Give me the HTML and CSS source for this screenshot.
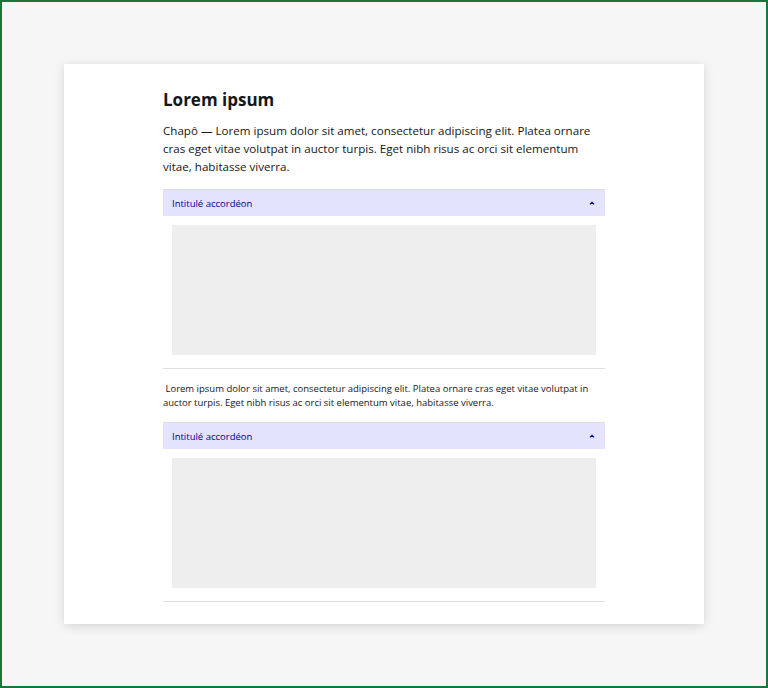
FILE: index.html
```html
<!DOCTYPE html>
<html lang="fr">
<head>
<meta charset="utf-8">
<link rel="stylesheet" href="styles.css">
</head>
<body>
<div class="frame">
  <main class="card">
    <div class="content">
      <h1 class="title">Lorem ipsum</h1>
      <p class="lead">Chapô — Lorem ipsum dolor sit amet, consectetur adipiscing elit. Platea ornare cras eget vitae volutpat in auctor turpis. Eget nibh risus ac orci sit elementum vitae, habitasse viverra.</p>
      <section class="accordion">
        <button class="acc-head"><span>Intitulé accordéon</span>
          <svg class="chev" width="6" height="4" viewBox="0 0 6 4"><path d="M1 3.3 L3 1.3 L5 3.3" fill="none" stroke="#000091" stroke-width="1.2"/></svg>
        </button>
        <div class="acc-body"><div class="placeholder"></div></div>
      </section>
      <p class="text">&nbsp;Lorem ipsum dolor sit amet, consectetur adipiscing elit. Platea ornare cras eget vitae volutpat in auctor turpis. Eget nibh risus ac orci sit elementum vitae, habitasse viverra.</p>
      <section class="accordion">
        <button class="acc-head"><span>Intitulé accordéon</span>
          <svg class="chev" width="6" height="4" viewBox="0 0 6 4"><path d="M1 3.3 L3 1.3 L5 3.3" fill="none" stroke="#000091" stroke-width="1.2"/></svg>
        </button>
        <div class="acc-body"><div class="placeholder"></div></div>
      </section>
    </div>
  </main>
</div>
</body>
</html>
```
FILE: styles.css
```css
html, body {
  margin: 0;
  padding: 0;
}
body {
  font-family: "Open Sans", "Liberation Sans", sans-serif;
  color: #161616;
}
.frame {
  box-sizing: border-box;
  width: 768px;
  height: 688px;
  border: 2px solid #18753c;
  background: #f6f6f6;
  padding: 62px 0 0 62px;
}
.card {
  width: 640px;
  height: 560px;
  background: #fff;
  box-shadow: 0 2px 10px rgba(0, 0, 0, 0.14);
}
.content {
  width: 442px;
  margin: 0 auto;
  padding-top: 24px;
}
.title {
  margin: 0;
  font-size: 17px;
  line-height: 24px;
  font-weight: 700;
  color: #161616;
}
.lead {
  margin: 10px 0 13px;
  font-size: 11.6px;
  line-height: 18px;
}
.accordion {
  border-top: 1px solid #dddddd;
  border-bottom: 1px solid #dddddd;
}
.acc-head {
  display: flex;
  align-items: center;
  justify-content: space-between;
  width: 100%;
  height: 26px;
  margin: 0;
  padding: 0 10px 0 9px;
  border: 0;
  background: #e3e3fd;
  color: #000091;
  font-family: inherit;
  font-size: 9.5px;
  font-weight: 500;
  cursor: pointer;
}
.chev {
  display: block;
}
.acc-body {
  padding: 9px 9px 13px;
}
.placeholder {
  height: 130px;
  background: #eeeeee;
}
.text {
  margin: 13px 0 12px;
  font-size: 9.5px;
  line-height: 14px;
}
```
